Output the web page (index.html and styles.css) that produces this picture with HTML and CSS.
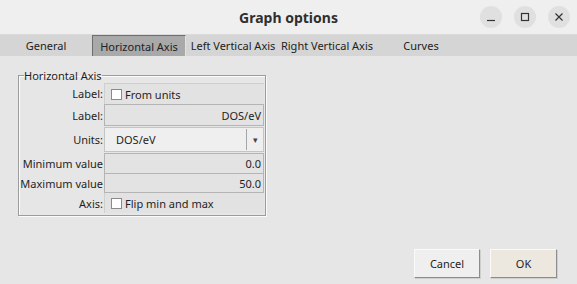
FILE: index.html
```html
<!DOCTYPE html>
<html>
	<head>
		<meta charset="UTF-8">
		<title>Graph options</title>
		<link rel="stylesheet" href="styles.css">
	</head>
	<body>
		<header class="titlebar">
			<span></span>
			<h1 class="title">Graph options</h1>
			<div class="controls">
				<span class="wbtn"><svg width="10" height="10" viewBox="0 0 10 10"><path d="M1 8.5H9" stroke="#333" stroke-width="1.2"/></svg></span>
				<span class="wbtn"><svg width="10" height="10" viewBox="0 0 10 10"><rect x="1.5" y="1.5" width="7" height="7" fill="none" stroke="#333" stroke-width="1.2"/></svg></span>
				<span class="wbtn"><svg width="10" height="10" viewBox="0 0 10 10"><path d="M1.5 1.5L8.5 8.5M8.5 1.5L1.5 8.5" stroke="#333" stroke-width="1.2"/></svg></span>
			</div>
		</header>
		<nav class="tabs">
			<span class="tab first">General</span>
			<span class="tab now">Horizontal Axis</span>
			<span class="tab">Left Vertical Axis</span>
			<span class="tab">Right Vertical Axis</span>
			<span class="tab">Curves</span>
		</nav>
		<main class="content">
			<fieldset class="group">
				<legend>Horizontal Axis</legend>
				<div class="form">
					<span class="lbl">Label:</span>
					<div class="cell check top"><span class="box"></span>From units</div>

					<span class="lbl">Label:</span>
					<div class="field full">DOS/eV</div>

					<span class="lbl">Units:</span>
					<div class="combo"><span class="combo-text">DOS/eV</span><span class="arrow">&#9662;</span></div>

					<span class="lbl">Minimum value</span>
					<div class="field">0.0</div>

					<span class="lbl">Maximum value</span>
					<div class="field full">50.0</div>

					<span class="lbl">Axis:</span>
					<div class="cell check"><span class="box"></span>Flip min and max</div>
				</div>
			</fieldset>
		</main>
		<footer class="actions">
			<button class="btn">Cancel</button>
			<button class="btn ok">OK</button>
		</footer>
	</body>
</html>
```
FILE: styles.css
```css
html,
body {
	margin: 0;
	width: 577px;
	height: 284px;
	overflow: hidden;
}

body {
	display: flex;
	flex-direction: column;
	background: #e6e6e6;
	font-family: "Noto Sans", sans-serif;
	font-size: 11px;
	color: #1e1e1e;
}

.titlebar {
	height: 35px;
	box-sizing: border-box;
	display: grid;
	grid-template-columns: 1fr auto 1fr;
	align-items: center;
	background: #efefef;
	border-bottom: 1px solid #dadada;
}

.title {
	margin: 0;
	font-size: 14px;
	font-weight: bold;
	color: #2f2f2f;
}

.controls {
	justify-self: end;
	display: flex;
	gap: 12px;
	margin-right: 7px;
}

.wbtn {
	width: 22px;
	height: 22px;
	border-radius: 50%;
	background: #e0e0e0;
	display: flex;
	align-items: center;
	justify-content: center;
}

.tabs {
	height: 21px;
	display: flex;
	background: #d5d5d5;
}

.tab {
	width: 94px;
	box-sizing: border-box;
	display: flex;
	align-items: center;
	justify-content: center;
	white-space: nowrap;
	color: #222;
}

.tab.first {
	width: 92px;
}

.tab.now {
	background: #a9a9a9;
	border-left: 1px solid #6e6e6e;
	border-top: 1px solid #6e6e6e;
	border-right: 1px solid #e2e2e2;
}

.content {
	flex: 1;
	padding-top: 12px;
}

.group {
	margin: 0 0 0 18px;
	padding: 0 1px 2px 0;
	width: 247px;
	box-sizing: border-box;
	border: 1px solid #9c9c9c;
	box-shadow: 1px 1px 0 #fbfbfb, inset 1px 1px 0 #fbfbfb;
}

.group legend {
	margin-left: 5px;
	padding: 0;
	line-height: 15px;
}

.form {
	display: grid;
	grid-template-columns: 85px 160px;
	grid-template-rows: 21px 22px 27px 20px 20px 20px;
}

.lbl {
	display: flex;
	align-items: center;
	justify-content: flex-end;
	padding-right: 1px;
	white-space: nowrap;
}

.cell {
	display: flex;
	align-items: center;
	border-left: 1px solid #cfcfcf;
	background: #e2e2e2;
}

.cell.top {
	border-top: 1px solid #cfcfcf;
}

.check {
	padding-left: 6px;
}

.box {
	width: 11px;
	height: 11px;
	box-sizing: border-box;
	border: 1px solid #8a8a8a;
	background: #fff;
	margin-right: 3px;
}

.field {
	display: flex;
	align-items: center;
	justify-content: flex-end;
	padding-right: 2px;
	background: #e3e3e3;
	border: 1px solid #b4b4b4;
	border-bottom: none;
}

.field.full {
	border-bottom: 1px solid #b4b4b4;
}

.combo {
	margin: 1px 0;
	display: flex;
	align-items: center;
	background: #efefef;
	border: 1px solid #c4c4c4;
}

.combo-text {
	flex: 1;
	padding-left: 11px;
}

.arrow {
	width: 16px;
	height: 21px;
	display: flex;
	align-items: center;
	justify-content: center;
	border-left: 1px solid #a6a6a6;
	font-size: 9px;
	color: #444;
}

.actions {
	display: flex;
	justify-content: flex-end;
	gap: 10px;
	padding: 0 20px 6px 0;
}

.btn {
	width: 66px;
	height: 29px;
	font-family: "Noto Sans", sans-serif;
	font-size: 11px;
	color: #1e1e1e;
	background: #efefef;
	border: 1px solid #fafafa;
	border-right-color: #8c8c8c;
	border-bottom-color: #8c8c8c;
	box-shadow: 1px 1px 0 #cfcfcf;
	padding: 0;
}

.btn.ok {
	width: 67px;
	background: #ece8e0;
}
```
